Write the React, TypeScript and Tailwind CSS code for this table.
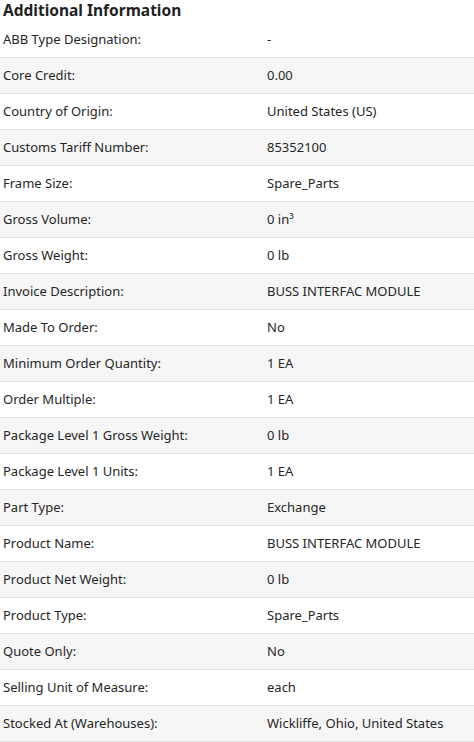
const rows: [string, string][] = [
  ["ABB Type Designation:", "-"],
  ["Core Credit:", "0.00"],
  ["Country of Origin:", "United States (US)"],
  ["Customs Tariff Number:", "85352100"],
  ["Frame Size:", "Spare_Parts"],
  ["Gross Volume:", "0 in³"],
  ["Gross Weight:", "0 lb"],
  ["Invoice Description:", "BUSS INTERFAC MODULE"],
  ["Made To Order:", "No"],
  ["Minimum Order Quantity:", "1 EA"],
  ["Order Multiple:", "1 EA"],
  ["Package Level 1 Gross Weight:", "0 lb"],
  ["Package Level 1 Units:", "1 EA"],
  ["Part Type:", "Exchange"],
  ["Product Name:", "BUSS INTERFAC MODULE"],
  ["Product Net Weight:", "0 lb"],
  ["Product Type:", "Spare_Parts"],
  ["Quote Only:", "No"],
  ["Selling Unit of Measure:", "each"],
  ["Stocked At (Warehouses):", "Wickliffe, Ohio, United States"],
];

export default function App() {
  return (
    <div className="w-[474px] bg-white text-[#262626] font-['Noto_Sans',sans-serif]">
      <h2 className="h-[22px] pl-[3px] text-[15.5px] leading-[20px] font-bold text-[#1f1f1f]">
        Additional Information
      </h2>
      <div>
        {rows.map(([label, value], i) => (
          <div
            key={label}
            className={`grid grid-cols-[267px_1fr] h-[36px] items-center border-b border-[#e2e2e2] text-[13px] ${
              i % 2 === 1 ? "bg-[#f6f6f6]" : "bg-white"
            }`}
          >
            <span className="pl-[3px]">{label}</span>
            <span>{value}</span>
          </div>
        ))}
      </div>
    </div>
  );
}
